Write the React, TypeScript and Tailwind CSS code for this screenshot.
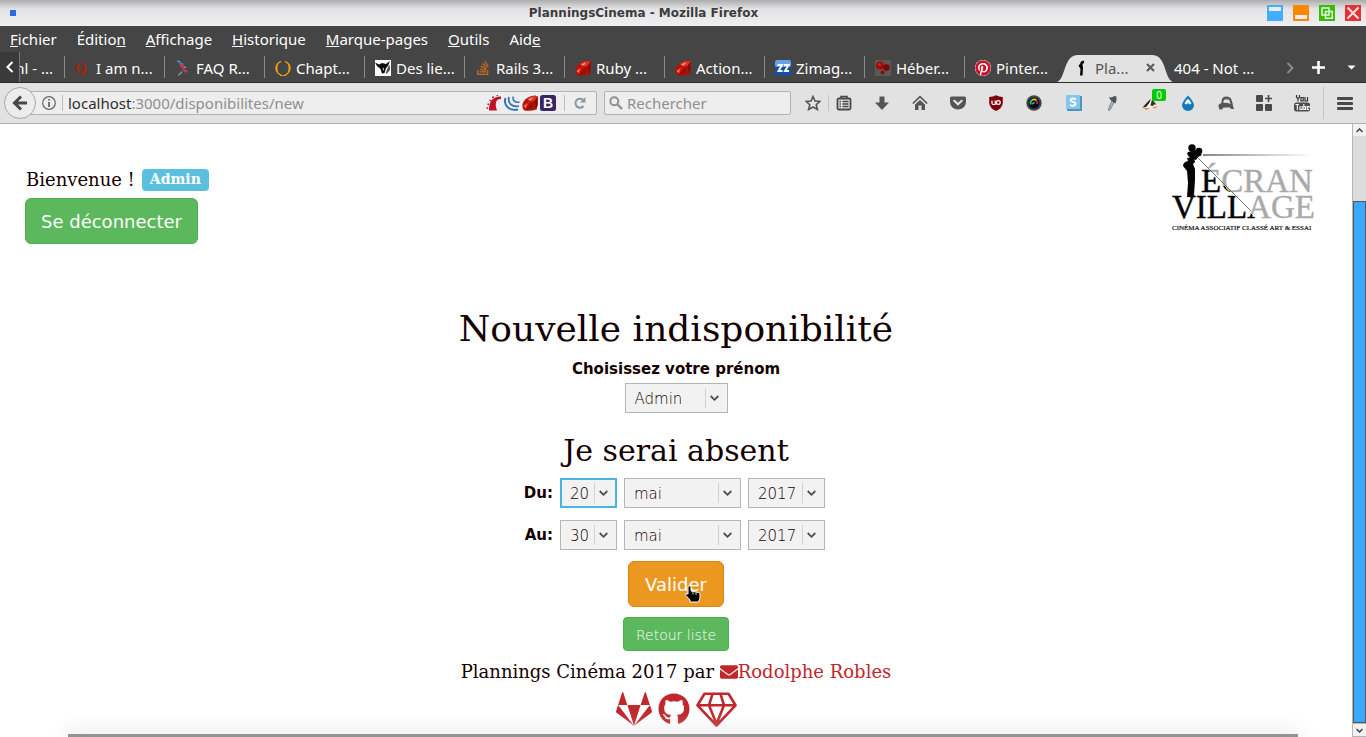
import type { ReactNode } from "react";
import { FaEnvelope, FaGithub, FaStackOverflow, FaPinterest, FaGitlab } from "react-icons/fa";

/* ---------- small drawings ---------- */

const Ruby = () => (
  <svg width="16" height="16" viewBox="0 0 16 16" className="shrink-0">
    <path d="M.5 9.500 Q1 6 5 3 Q9 .3 13 .5 L15.800 1.500 L15.800 9.500 L14.500 14.500 Q8 16.500 2.500 15.500 Q0 14 .5 9.500z" fill="#b31209" />
    <path d="M5 3.500 L11 1 L15.500 1.500 L12.500 6 L7 7z" fill="#dc3423" />
    <path d="M6 4.500 L11 2.200 L9 5.200z" fill="#f6a89c" />
    <path d="M12.500 6 L15.600 2 L15.500 10 L14 14.500z" fill="#8b0c05" />
    <path d="M1 10 L7 7 L4 14z" fill="#d72c1c" />
    <path d="M3 15 L12.500 6 L9.500 14z" fill="#970d06" />
    <path d="M2 11.500 L5 8.500 L3.500 13z" fill="#f3897a" />
  </svg>
);
const Bird = () => (
  <svg width="16" height="16" viewBox="0 0 16 16" className="shrink-0">
    <path d="M3 1 L8 3 L10 8 L6 8z" fill="#4a6fd0" />
    <path d="M5 4 L8 5 L9 9 L6 8z" fill="#e8281f" />
    <path d="M7 8 L13 11 L10 13z" fill="#d43a5c" />
    <path d="M3 15 L8 10 L6 14z M9 6 L12 8 L9 8z" fill="#8d8fc4" />
    <path d="M2 1 L5 1.500 M3 15.500 L7 12" stroke="#9aa" fill="none" />
  </svg>
);
const Cow = () => (
  <svg width="16" height="16" viewBox="0 0 16 16" className="shrink-0">
    <rect width="16" height="16" fill="#fff" />
    <path d="M0 2.500 L4 4.500 L7 3 L11 4 L15 1 L13 6 L11 8 L9.500 13 L7 13.500 L5.500 9 L2 6z" fill="#0b0b0b" />
    <path d="M13 7 L14.800 5 L15 10 L12 13.500 L10.500 13.500z" fill="#555" />
    <path d="M7.500 9 L9 7.500 L8.500 11z" fill="#eee" />
  </svg>
);
const Zim = () => (
  <svg width="16" height="16" viewBox="0 0 16 16" className="shrink-0">
    <rect width="16" height="16" rx="2" fill="#174f9c" />
    <rect width="16" height="7" rx="2" fill="#6aa2e6" />
    <path d="M2.500 5 H7 L3.500 11 H7.500 M9 5 H13.500 L10 11 H14" fill="none" stroke="#fff" strokeWidth="1.900" />
  </svg>
);
const Blobs = () => (
  <svg width="16" height="16" viewBox="0 0 16 16" className="shrink-0">
    <rect width="16" height="16" fill="#5d5858" />
    <circle cx="5" cy="5.500" r="4" fill="#9e0a0a" />
    <circle cx="11.500" cy="7.500" r="3.200" fill="#7c0505" />
    <circle cx="7.500" cy="12.500" r="2" fill="#8c0707" />
    <circle cx="4.500" cy="4.500" r="1.500" fill="#d02a2a" />
  </svg>
);
const Ring = () => (
  <svg width="16" height="16" viewBox="0 0 16 16" className="shrink-0">
    <path d="M6 1.500 A7 7 0 0 0 6 15 A5.500 7 0 0 1 6 1.500z M10 1.500 A7 7 0 0 1 10 15 A5.500 7 0 0 0 10 1.500z" fill="#f3a20a" stroke="#f3a20a" strokeWidth="1" />
    <path d="M5 15 Q8 16.500 11 15" fill="none" stroke="#f3a20a" strokeWidth="1.200" />
  </svg>
);
const LetterQ = () => (
  <svg width="16" height="16" viewBox="0 0 16 16" className="shrink-0">
    <text x="0" y="13" fontFamily="Liberation Serif, serif" fontSize="15" fontWeight="700" fill="#b01e08">Q</text>
  </svg>
);
const Projectionist = () => (
  <svg width="16" height="16" viewBox="0 0 16 16" className="shrink-0">
    <path d="M6 1.500 L9 .5 L9 3 L7.500 4 L8 8 L7.500 15.500 L5 15.500 L5.500 9 L3.500 5.500 L5 4z" fill="#050505" />
  </svg>
);
const RailsTrack = () => (
  <svg width="16" height="16" viewBox="0 0 16 16" className="shrink-0">
    <path d="M3 15.500 C3 7 6 1.500 15 1.500 L15 4 C10 3.500 8.500 8 11 15.500z" fill="#bf1028" />
    <path d="M.5 13 L2 13 M1.500 9 L3 9.500 M3.500 5 L5 6 M6.500 1.500 L7.500 3 M11 0 L11.500 1" stroke="#bf1028" strokeWidth="1.500" />
  </svg>
);
const JQuery = () => (
  <svg width="16" height="16" viewBox="0 0 16 16" className="shrink-0" fill="none" stroke="#2f6fb8">
    <path d="M1.500 3 C-.8 10 5 16.500 14 14.500" strokeWidth="1.900" />
    <path d="M5 2 C3.500 8 8 12.500 15 11" strokeWidth="1.700" />
    <path d="M9 1.500 C8.500 5.500 11 8 15.500 7" strokeWidth="1.500" />
  </svg>
);
const BootstrapB = () => (
  <svg width="16" height="16" viewBox="0 0 16 16" className="shrink-0">
    <rect width="16" height="16" rx="2.500" fill="#3b2463" />
    <text x="3" y="13" fontFamily="Liberation Sans, sans-serif" fontSize="14" fontWeight="700" fill="#fff">B</text>
  </svg>
);

/* ---------- toolbar icons ---------- */

type Tool = { name: string; icon: ReactNode; badge?: string };

const builtInTools: Tool[] = [
  {
    name: "Marque-pages",
    icon: (
      <svg width="16" height="16" viewBox="0 0 16 16">
        <path d="M5 3 L5 1.500 H11 V3" fill="none" stroke="#474747" strokeWidth="1.500" />
        <rect x="1.500" y="3.500" width="13" height="11" rx="1.500" fill="none" stroke="#474747" strokeWidth="1.800" />
        <path d="M3.500 6.500 H5 M6.500 6.500 H12.500 M3.500 9 H5 M6.500 9 H12.500 M3.500 11.500 H5 M6.500 11.500 H12.500" stroke="#474747" strokeWidth="1.500" />
      </svg>
    ),
  },
  {
    name: "Téléchargements",
    icon: (
      <svg width="16" height="16" viewBox="0 0 16 16">
        <path d="M5.500 1.500 H10.500 V7.500 H15 L8 15 L1 7.500 H5.500z" fill="#555" />
      </svg>
    ),
  },
  {
    name: "Accueil",
    icon: (
      <svg width="16" height="16" viewBox="0 0 16 16">
        <path d="M.8 8.500 L8 1.700 L15.200 8.500" fill="none" stroke="#555" strokeWidth="1.700" />
        <path d="M3 9.500 L8 5 L13 9.500 V15 H9.500 V10.500 H6.500 V15 H3z" fill="#555" />
      </svg>
    ),
  },
  {
    name: "Pocket",
    icon: (
      <svg width="16" height="16" viewBox="0 0 16 16">
        <path d="M1.500 1.500 H14.500 Q16 1.500 16 3 V7 A8 7.500 0 0 1 0 7 V3 Q0 1.500 1.500 1.500z" fill="#555" />
        <path d="M4.300 5.800 L8 9.300 L11.700 5.800" fill="none" stroke="#e2e2e2" strokeWidth="2.200" strokeLinecap="round" />
      </svg>
    ),
  },
  {
    name: "uBlock",
    icon: (
      <svg width="16" height="16" viewBox="0 0 16 16">
        <path d="M8 .3 Q11 2 14.800 2 V8 Q14.500 13 8 16 Q1.500 13 1.200 8 V2 Q5 2 8 .3z" fill="#800009" />
        <path d="M4 5.500 V8.500 Q4 9.500 5.500 9.500 H7.200 V5.500" fill="none" stroke="#fff" strokeWidth="1.200" />
        <circle cx="10.300" cy="7.500" r="1.900" fill="none" stroke="#fff" strokeWidth="1.200" />
      </svg>
    ),
  },
  {
    name: "Couleurs",
    icon: (
      <svg width="16" height="16" viewBox="0 0 16 16">
        <circle cx="8" cy="8" r="7.700" fill="#41464d" />
        <circle cx="8" cy="8" r="5.500" fill="#0c0c10" />
        <path d="M5 9.500 A3.500 3.500 0 0 1 6 5" fill="none" stroke="#22c55e" strokeWidth="1.800" />
        <path d="M6 5 A3.700 3.700 0 0 1 10.500 5.500" fill="none" stroke="#f5c400" strokeWidth="1.800" />
        <path d="M10.500 5.500 A3.700 3.700 0 0 1 11 9" fill="none" stroke="#d3268f" strokeWidth="1.500" />
        <path d="M6 9 L8.500 7.500" stroke="#18a5e0" strokeWidth="1.800" />
      </svg>
    ),
  },
];

const addonTools: Tool[] = [
  {
    name: "Stylish",
    icon: (
      <svg width="16" height="16" viewBox="0 0 16 16">
        <rect x="1" y="1" width="15" height="15" rx="1" fill="#4f93b8" />
        <rect width="14" height="14" rx="1" fill="#82c8ec" />
        <path d="M10 4.300 Q7 2.800 5 4 Q3.800 6 7 6.800 Q10.500 7.700 9 10 Q7 11.500 4 10" fill="none" stroke="#fff" strokeWidth="1.900" />
      </svg>
    ),
  },
  {
    name: "Pipette",
    icon: (
      <svg width="16" height="16" viewBox="0 0 16 16">
        <path d="M8 5.500 L10.500 7 L6 15 L4.500 15.500 L4.800 13z" fill="#a9b0b6" stroke="#6d767e" strokeWidth=".7" />
        <path d="M5 2 L8 2.500 L10 1 L12.500 1.500 L12.500 5 L11.500 8.500 L9 7 L6.500 5z" fill="#4c545c" />
      </svg>
    ),
  },
  {
    name: "Renard",
    badge: "0",
    icon: (
      <svg width="17" height="16" viewBox="0 0 17 16">
        <path d="M0 13 L5 7 L9 4 L15.500 9 L16 12 L9 14 L4 15z" fill="#f6ead9" />
        <path d="M.5 12.500 L6 6.500 L9 3.500 L7 9 L4 12z" fill="#242424" />
        <path d="M8.500 10.500 L10 4.500 L14.500 9.500 L12 9.500 L11 11z" fill="#303030" />
        <path d="M5 11 L8 7.500 L8 12z" fill="#fff" />
        <path d="M1 13 L8 13 L4.500 15z M10 12.500 L16 11 L13 13.500z" fill="#e48a3a" />
      </svg>
    ),
  },
  {
    name: "Goutte",
    icon: (
      <svg width="16" height="16" viewBox="0 0 16 16">
        <path d="M8 .5 Q14 7 14 10.200 A6 5.700 0 0 1 2 10.200 Q2 7 8 .5z" fill="#1179bf" />
        <path d="M4.500 8.500 Q6 5.500 8 3.800 Q10 5.500 11.500 8.500 L9.700 9.500 L8 8 L6.300 9.500z" fill="#fff" />
      </svg>
    ),
  },
  {
    name: "Anonyme",
    icon: (
      <svg width="16" height="16" viewBox="0 0 16 16">
        <path d="M3.500 8 Q3 1.500 8 1.500 Q13 1.500 13.500 5 Q14.500 7 15 11 L16 14 H13 L12 12.500 H5.500 L4 14.500 H1.500 L.3 10.500 Q1 8.500 3.500 8z" fill="#555" />
        <path d="M5.500 8 Q5 4 8 3.500 Q11 3.500 11.500 5.500 L12.500 9 Q8 7 5.500 8z" fill="#e2e2e2" />
        <path d="M5 4.500 Q8 1.800 11.500 4.500z" fill="#555" />
      </svg>
    ),
  },
  {
    name: "Modules",
    icon: (
      <svg width="16" height="16" viewBox="0 0 16 16" fill="#4a4a4a">
        <rect width="7" height="7" rx="1" />
        <rect y="9" width="7" height="7" rx="1" />
        <rect x="9" y="9" width="7" height="7" rx="1" />
        <path d="M11.700 0 h1.700 v2.700 h2.600 v1.600 h-2.600 V7 h-1.700 V4.300 H9 V2.700 h2.700z" />
      </svg>
    ),
  },
  {
    name: "YouTube",
    icon: (
      <svg width="16" height="18" viewBox="0 0 16 18">
        <path d="M2.500 1 V3.500 L4 4.500 L5.500 3.500 V1 M4 4.500 V7.500 M7 3.500 H9.200 V7 H7z M11 3 V7 H13.500 V3" fill="none" stroke="#333" strokeWidth="1.200" />
        <rect y="8.500" width="16" height="9" rx="2.500" fill="#4d4d4d" />
        <path d="M1.500 10.500 H5 M3.300 10.500 V16 M6 12 V15.500 H8.200 V12 M9.800 10 V15.500 H11.500 V12.500 H9.800 M15 15.500 H13.300 V12.500 H15 V14" fill="none" stroke="#fff" strokeWidth="1.100" />
      </svg>
    ),
  },
];

const ToolGroup = ({ tools }: { tools: Tool[] }) => (
  <div className="flex">
    {tools.map((t) => (
      <button key={t.name} aria-label={t.name} className="relative flex h-5 w-[38px] items-center justify-center">
        {t.icon}
        {t.badge && (
          <span className="absolute -top-1 right-[3px] h-3 w-[14px] rounded-[2px] bg-[#0c0] text-[10px] leading-3 text-white">{t.badge}</span>
        )}
      </button>
    ))}
  </div>
);

/* ---------- browser window ---------- */

const TitleBar = () => (
  <div className="flex h-[26px] items-center bg-linear-to-b from-[#adadad] via-[#e4e4e7] via-35% to-[#efeff1] pl-[10px] pr-[5px]">
    <span className="size-[6px] bg-[#2f66ea]" />
    <h1 className="flex-1 pl-1 text-center font-['DejaVu_Sans',sans-serif] text-[12px] leading-none font-bold text-[#3c3c3c]">
      PlanningsCinema - Mozilla Firefox
    </h1>
    <div className="flex gap-[10px]">
      <button aria-label="Enrouler" className="h-4 w-4 bg-[#41aeff] px-[2px] pt-[2px]">
        <span className="mb-[10px] block h-[4px] bg-[#e6edf3]" />
      </button>
      <button aria-label="Réduire" className="h-4 w-4 bg-[#f98700] px-[2px] pt-[10px]">
        <span className="mb-[2px] block h-[4px] bg-[#f0ece6]" />
      </button>
      <button aria-label="Agrandir" className="h-4 w-4 bg-[#35bf00]">
        <svg width="16" height="16" viewBox="0 0 16 16" fill="none" stroke="#e9f3e6" strokeWidth="1.500">
          <path d="M3 3 H10 V10 H3z M6.500 6.500 H13.300 V13.300 H6.500z" />
        </svg>
      </button>
      <button aria-label="Fermer" className="h-4 w-4 bg-[#ec2f33]">
        <svg width="16" height="16" viewBox="0 0 16 16" stroke="#f6e6e6" strokeWidth="2">
          <path d="M2.500 2.500 L13.500 13.500 M13.500 2.500 L2.500 13.500" />
        </svg>
      </button>
    </div>
  </div>
);

const MenuBar = () => (
  <nav className="flex h-[26px] items-center gap-5 px-[10px] pb-px text-[15px] leading-5 text-white">
    <button><u>F</u>ichier</button>
    <button>Éditio<u>n</u></button>
    <button><u>A</u>ffichage</button>
    <button><u>H</u>istorique</button>
    <button><u>M</u>arque-pages</button>
    <button><u>O</u>utils</button>
    <button>Aid<u>e</u></button>
  </nav>
);

const tabs: { icon: ReactNode; label: string }[] = [
  { icon: <LetterQ />, label: "I am n..." },
  { icon: <Bird />, label: "FAQ R..." },
  { icon: <Ring />, label: "Chapt..." },
  { icon: <Cow />, label: "Des lie..." },
  { icon: <FaStackOverflow className="size-4 shrink-0 text-[#c96a1c]" />, label: "Rails 3..." },
  { icon: <Ruby />, label: "Ruby ..." },
  { icon: <Ruby />, label: "Action..." },
  { icon: <Zim />, label: "Zimag..." },
  { icon: <Blobs />, label: "Héber..." },
  { icon: <FaPinterest className="size-4 shrink-0 rounded-full bg-white text-[#cb1027]" />, label: "Pinter..." },
];

const TabBar = () => (
  <div className="flex h-[31px] items-center overflow-hidden border-b border-[#2b2b2b] text-[15px] leading-5 whitespace-nowrap text-white">
    <button aria-label="Onglets précédents" className="flex h-full w-5 shrink-0 items-center justify-center border-r border-[#777] bg-[#3a3a3a]">
      <svg width="8" height="12" viewBox="0 0 8 12" fill="none" stroke="#fff" strokeWidth="2">
        <path d="M6.500 1 L1.500 6 L6.500 11" />
      </svg>
    </button>
    <button className="flex w-[44px] shrink-0 justify-end overflow-hidden pt-px pr-[11px]">ml - ...</button>
    {tabs.map((t) => (
      <button key={t.label} className="flex h-[22px] w-[100px] shrink-0 items-center gap-[5px] border-l border-[#8a8a8a] pt-px pl-[10px]">
        {t.icon}
        <span>{t.label}</span>
      </button>
    ))}
    <button className="relative flex h-full w-[101px] shrink-0 items-center text-[#555]">
      <svg width="122" height="28" viewBox="0 0 122 28" className="absolute -left-[10px] top-[3px]">
        <path d="M0 28 C13 27 8 0 24 0 H98 C114 0 109 27 122 28z" fill="#e2e2e2" />
      </svg>
      <span className="relative flex flex-1 items-center gap-1 pt-px pr-[10px] pl-[11px]">
        <Projectionist />
        <span className="flex-1 text-left">Pla...</span>
        <svg width="9" height="9" viewBox="0 0 9 9" stroke="#5c5c5c" strokeWidth="2.200">
          <path d="M1 1 L8 8 M8 1 L1 8" />
        </svg>
      </span>
    </button>
    <button className="shrink-0 pt-px pl-[9px]">404 - Not ...</button>
    <div className="ml-auto flex shrink-0 items-center pt-px pr-[10px]">
      <svg width="8" height="12" viewBox="0 0 8 12" fill="none" stroke="#8a8a8a" strokeWidth="2" className="mr-[18px]">
        <path d="M1.500 1 L6.500 6 L1.500 11" />
      </svg>
      <svg width="13" height="13" viewBox="0 0 13 13" stroke="#fff" strokeWidth="2.600" className="mr-[22px]">
        <path d="M6.500 0 V13 M0 6.500 H13" />
      </svg>
      <svg width="9" height="5" viewBox="0 0 9 5" fill="#fff">
        <path d="M.5 .5 H8.500 L4.500 4.500z" />
      </svg>
    </div>
  </div>
);

const NavBar = () => (
  <div className="flex h-[41px] items-center border-b border-[#b0b0b0] bg-[#e2e2e2] pl-1 text-[15px] leading-5">
    <button aria-label="Page précédente" className="z-10 flex size-8 shrink-0 items-center justify-center rounded-full border border-[#a9a9a9] bg-[#ececec]">
      <svg width="16" height="16" viewBox="0 0 16 16" fill="none" stroke="#474747" strokeWidth="3">
        <path d="M9 1.500 L2.500 8 L9 14.500 M3 8 H15" />
      </svg>
    </button>
    <div className="-ml-4 flex h-6 min-w-0 flex-1 items-center rounded-r-[2px] border border-[#b3b3b3] bg-[#eee] pl-[21px]">
      <svg width="14" height="14" viewBox="0 0 14 14" fill="none" stroke="#666" className="shrink-0">
        <circle cx="7" cy="7" r="6.300" strokeWidth="1.200" />
        <path d="M7 3 V4.600 M7 6 V11" strokeWidth="1.800" />
      </svg>
      <span className="mr-[5px] ml-[6px] h-4 w-px bg-[#bbb]" />
      <label htmlFor="address" className="whitespace-nowrap text-[#8f8f8f]">
        <span className="text-[#2f2f2f]">localhost</span>:3000/disponibilites/new
      </label>
      <input id="address" className="min-w-0 flex-1 bg-transparent outline-none" />
      <div className="flex items-center gap-[2px]">
        <RailsTrack />
        <JQuery />
        <Ruby />
        <BootstrapB />
      </div>
      <span className="mx-[8px] h-4 w-px bg-[#bbb]" />
      <svg width="14" height="14" viewBox="0 0 14 14" fill="none" className="mr-[9px] shrink-0">
        <path d="M10.500 10 A4.500 4.500 0 1 1 10 3.800" stroke="#8b979f" strokeWidth="2" />
        <path d="M12.500 1 V6.500 H7z" fill="#8b979f" />
      </svg>
    </div>
    <div className="ml-[7px] flex h-6 w-[187px] shrink-0 items-center gap-1 rounded-[2px] border border-[#b3b3b3] bg-[#eee] pl-1">
      <svg width="14" height="14" viewBox="0 0 14 14" fill="none" stroke="#909090" className="shrink-0">
        <circle cx="5.300" cy="5.300" r="4" strokeWidth="2" />
        <path d="M8.500 8.500 L13 13" strokeWidth="2.400" />
      </svg>
      <input aria-label="Rechercher" placeholder="Rechercher" className="min-w-0 flex-1 bg-transparent outline-none placeholder:text-[#8f8f8f] placeholder:opacity-100" />
    </div>
    <button aria-label="Ajouter aux marque-pages" className="ml-[14px] flex w-[24px] shrink-0 border-r border-[#c6c6c6]">
      <svg width="16" height="16" viewBox="0 0 16 16" fill="none" stroke="#555" strokeWidth="1.600">
        <path d="M8 1.500 L10 6 L15 6.400 L11.200 9.700 L12.400 14.500 L8 12 L3.600 14.500 L4.800 9.700 L1 6.400 L6 6z" />
      </svg>
    </button>
    <div className="-ml-1 flex shrink-0 gap-[2px]">
      <ToolGroup tools={builtInTools} />
      <ToolGroup tools={addonTools} />
    </div>
    <button aria-label="Menu" className="ml-[2px] flex h-8 w-[43px] shrink-0 items-center justify-center border-l border-[#c6c6c6]">
      <svg width="16" height="13" viewBox="0 0 16 13" fill="#4a4a4a">
        <rect width="16" height="3" rx="1" />
        <rect y="5" width="16" height="3" rx="1" />
        <rect y="10" width="16" height="3" rx="1" />
      </svg>
    </button>
  </div>
);

/* ---------- page ---------- */

const Logo = () => (
  <svg width="146" height="92" viewBox="0 0 146 92" role="img" aria-label="Écran Village">
    <defs>
      <linearGradient id="beam" gradientUnits="userSpaceOnUse" x1="46" y1="56" x2="66" y2="36">
        <stop offset="0.500" stopColor="#050505" />
        <stop offset="0.500" stopColor="#a9a9a9" />
      </linearGradient>
      <linearGradient id="ray" x1="0" x2="1">
        <stop offset="0" stopColor="#888" />
        <stop offset="1" stopColor="#fff" />
      </linearGradient>
    </defs>
    <rect x="32" y="11" width="110" height="2" fill="url(#ray)" />
    <g fontFamily="Liberation Serif, serif" fontSize="33" fill="url(#beam)" stroke="url(#beam)" strokeWidth=".4">
      <text x="30" y="49">ÉCRAN</text>
      <text x="1" y="75">VILLAGE</text>
    </g>
    <path d="M26 14 L80 68" stroke="#777" strokeWidth="1" />
    <g fill="#050505">
      <circle cx="21" cy="5" r="3.700" />
      <circle cx="28" cy="8" r="3.300" />
      <path d="M17 9 L25 7 L31 12 L27 14 L25 17 L19 15 L16 11z" />
      <path d="M16 15 L23 14 L24 19 L22 21 L24 26 L24 37 L23 52 L24 54 L16 54 L17 40 L16 28 L12 23 Q12 19 17 18z" />
    </g>
    <text x="1" y="87" fontFamily="Liberation Serif, serif" fontSize="7" fill="#111" stroke="#111" strokeWidth=".2">
      CINÉMA ASSOCIATIF CLASSÉ ART &amp; ESSAI
    </text>
  </svg>
);

const Select = ({ id, label, value, options, size, focused }: { id: string; label?: string; value: string; options: string[]; size: string; focused?: boolean }) => (
  <span className={`relative inline-flex h-[30px] ${size}`}>
    <select
      id={id}
      aria-label={label}
      defaultValue={value}
      className={`w-full appearance-none rounded-none bg-[#f2f2f2] pt-[2px] text-[15px] font-light outline-none ${focused ? "border-2 border-[#4ab4e0] pl-[8px]" : "border border-[#b5b5b5] pl-[9px]"}`}
    >
      {options.map((o) => (
        <option key={o}>{o}</option>
      ))}
    </select>
    <span className="pointer-events-none absolute inset-y-[5px] right-[9px] flex items-center border-l border-[#d2d2d2] pl-1">
      <svg width="9" height="7" viewBox="0 0 9 7" fill="none" stroke="#4d4d4d" strokeWidth="1.800">
        <path d="M.7 1 L4.500 4.800 L8.300 1" />
      </svg>
    </span>
  </span>
);

const DateRow = ({ id, label, day, focused }: { id: string; label: string; day: string; focused?: boolean }) => (
  <div className="flex items-center gap-[7px]">
    <label htmlFor={id} className="flex w-[26px] justify-end text-[15px] leading-5 font-bold">{label}</label>
    <Select id={id} value={day} options={["20", "30"]} size="w-[57px]" focused={focused} />
    <Select id={`${id}-mois`} label="Mois" value="mai" options={["avril", "mai", "juin"]} size="w-[117px]" />
    <Select id={`${id}-annee`} label="Année" value="2017" options={["2017", "2018"]} size="w-[77px]" />
  </div>
);

const Scrollbar = () => (
  <div className="flex w-[14px] shrink-0 flex-col border-l border-[#b5b5b5] bg-[#dcdcdc]">
    <button aria-label="Défiler vers le haut" className="flex h-3 items-center justify-center bg-[#f2f2f2]">
      <svg width="7" height="5" viewBox="0 0 7 5" fill="none" stroke="#444" strokeWidth="1.500"><path d="M.5 4 L3.500 1 L6.500 4" /></svg>
    </button>
    <div className="flex flex-1 flex-col pt-[65px]">
      <div className="flex-1 border border-[#565656] bg-[#38a9ff]" />
    </div>
    <button aria-label="Défiler vers le bas" className="flex h-[14px] items-center justify-center border-y border-[#b5b5b5] bg-[#f2f2f2]">
      <svg width="7" height="5" viewBox="0 0 7 5" fill="none" stroke="#444" strokeWidth="1.500"><path d="M.5 1 L3.500 4 L6.500 1" /></svg>
    </button>
  </div>
);

const Page = () => (
  <div className="flex min-w-0 flex-1 flex-col overflow-hidden font-['DejaVu_Sans',sans-serif] text-[#140000]">
    <header className="flex items-start justify-between pt-[19px] pr-[35px] pl-[25px]">
      <div className="pt-[26px]">
        <p className="mb-[7px] flex items-center gap-[7px] pl-px font-['DejaVu_Serif',serif] text-[18px] leading-[22px]">
          Bienvenue !
          <span className="rounded-[4px] bg-[#5bc0de] px-[8px] pb-px text-[14px] leading-[21px] font-bold text-white">Admin</span>
        </p>
        <button className="rounded-[6px] border border-[#4cae4c] bg-[#5cb85c] px-[15px] pt-[11px] pb-[9px] text-[18px] leading-6 text-white">Se déconnecter</button>
      </div>
      <Logo />
    </header>

    <main className="mt-[65px] flex flex-col items-center">
      <h2 className="font-['DejaVu_Serif',serif] text-[36px] leading-10">Nouvelle indisponibilité</h2>
      <label htmlFor="prenom" className="mt-[10px] mb-1 text-[15px] leading-5 font-bold">Choisissez votre prénom</label>
      <Select id="prenom" value="Admin" options={["Admin"]} size="w-[103px]" />
      <h3 className="mt-[21px] font-['DejaVu_Serif',serif] text-[30px] leading-[33px]">Je serai absent</h3>
      <div className="mt-[11px] mb-[11px] flex flex-col gap-3">
        <DateRow id="du" label="Du:" day="20" focused />
        <DateRow id="au" label="Au:" day="30" />
      </div>
      <button className="relative rounded-[6px] border border-[#d58512] bg-[#ec971f] px-4 pt-[11px] pb-[9px] text-[18px] leading-6 text-white">
        Valider
        <svg width="16" height="18" viewBox="0 0 16 18" className="absolute top-[23px] right-[22px]">
          <path d="M3 1.500 Q4.500 0 6 1.500 V6 L13.500 7.500 Q15 8 15 9.500 V13 L13.500 17 H5 V15 L.8 10.500 V8.500 L3 9z" fill="#000" stroke="#fff" strokeWidth="1" />
          <path d="M8 7 V9.500 M11 7.500 V10" stroke="#fff" strokeWidth=".8" />
        </svg>
      </button>
      <a href="#liste" className="mt-[10px] rounded-[4px] border border-[#4cae4c] bg-[#5cb85c] px-3 pt-[7px] pb-[5px] text-[14px] leading-5 font-light text-white">Retour liste</a>
    </main>

    <footer className="mt-2 flex flex-col items-center font-['DejaVu_Serif',serif] text-[18px] leading-[26px]">
      <p className="flex items-center whitespace-pre">
        Plannings Cinéma 2017 par{" "}
        <a href="#contact" className="flex items-center text-[#c1272d]">
          <FaEnvelope className="size-[18px]" />
          Rodolphe Robles
        </a>
      </p>
      <div className="mt-[6px] mb-[7px] flex h-9 items-center gap-[6px] text-[#c1272d]">
        <a href="#gitlab" aria-label="GitLab"><FaGitlab className="size-9" /></a>
        <a href="#github" aria-label="GitHub"><FaGithub className="size-8" /></a>
        <a href="#gem" aria-label="Gem">
          <svg width="41" height="36" viewBox="0 0 41 36" fill="none" stroke="currentColor" strokeWidth="2.600" strokeLinejoin="round">
            <path d="M8.500 2.800 H32.500 L39.500 14.300 L20.500 34.500 L1.500 14.300z M1.500 14.300 H39.500 M16.500 2.800 L13 14.300 L20.500 33 L28 14.300 L24.500 2.800" />
          </svg>
        </a>
      </div>
    </footer>
    <div className="mr-[4%] ml-[5%] min-h-[3px] flex-1 bg-[#929292] shadow-[0_0_20px_2px_#d8d8d8]" />
  </div>
);

export default function App() {
  return (
    <div className="flex h-screen flex-col bg-white">
      <div className="shrink-0 bg-[#454545] font-['Noto_Sans',sans-serif]">
        <TitleBar />
        <MenuBar />
        <TabBar />
        <NavBar />
      </div>
      <div className="flex min-h-0 flex-1">
        <Page />
        <Scrollbar />
      </div>
    </div>
  );
}
